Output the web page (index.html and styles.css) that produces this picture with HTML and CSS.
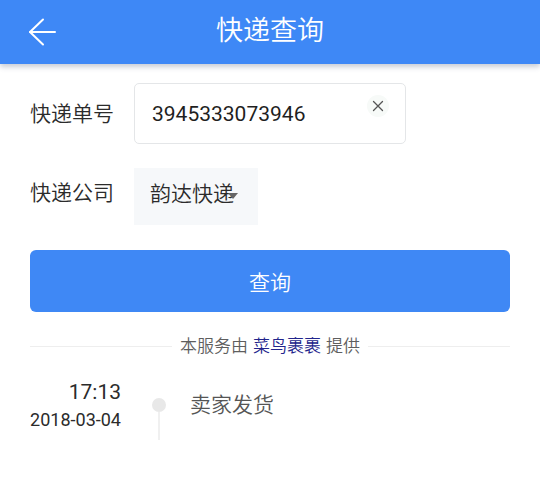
FILE: index.html
```html
<!DOCTYPE html>
<html lang="zh-CN">
<head>
<meta charset="utf-8">
<title>快递查询</title>
<link rel="stylesheet" href="styles.css">
</head>
<body>
<header class="topbar">
  <div class="topbar-left">
    <span class="back" aria-label="返回">
      <svg width="28" height="28" viewBox="0 0 28 28" fill="none" stroke="#fff" stroke-width="2" stroke-linecap="round" stroke-linejoin="round">
        <path d="M2 14 H27"/>
        <path d="M15 1.5 L2 14 L15 26.5"/>
      </svg>
    </span>
  </div>
  <h1 class="title">快递查询</h1>
  <div></div>
</header>

<main class="page">
  <div class="row">
    <div class="label">快递单号</div>
    <div class="input">
      <span class="input-value">3945333073946</span>
      <span class="clear" aria-label="清除">
        <svg width="12" height="12" viewBox="0 0 12 12" fill="none" stroke="#555" stroke-width="1.3" stroke-linecap="round">
          <path d="M1.5 1.5 L10.5 10.5 M10.5 1.5 L1.5 10.5"/>
        </svg>
      </span>
    </div>
  </div>

  <div class="row row-company">
    <div class="label label-company">快递公司</div>
    <div class="select">
      <span>韵达快递</span>
      <span class="caret"></span>
    </div>
  </div>

  <button class="query">查询</button>

  <div class="provider">
    <span class="provider-text">本服务由<b class="brand">菜鸟裹裹</b>提供</span>
  </div>

  <ul class="timeline">
    <li class="event">
      <div class="when">
        <div class="time">17:13</div>
        <div class="date">2018-03-04</div>
      </div>
      <div class="axis">
        <span class="dot"></span>
        <span class="stem"></span>
      </div>
      <div class="what">卖家发货</div>
    </li>
  </ul>
</main>
</body>
</html>
```

FILE: styles.css
```css
* { box-sizing: border-box; }

body {
  margin: 0;
  background: #fff;
  font-family: "Roboto", "Noto Sans CJK SC", "Noto Sans", sans-serif;
  font-weight: 400;
  color: #333;
}

.topbar {
  height: 64px;
  background: #3e88f6;
  display: grid;
  grid-template-columns: 1fr auto 1fr;
  align-items: center;
  box-shadow: 0 3px 5px rgba(60, 80, 110, 0.28);
  position: relative;
  z-index: 1;
}

.topbar-left {
  padding-left: 28px;
  display: flex;
  align-items: center;
}

.back {
  display: flex;
  width: 28px;
  height: 28px;
}

.title {
  margin: 0;
  font-size: 27px;
  font-weight: 350;
  color: #fff;
  line-height: 32px;
  margin-top: -2px;
}

.page {
  padding: 19px 30px 0 30px;
}

.row {
  display: flex;
  align-items: center;
}

.label {
  width: 104px;
  font-size: 21px;
  font-weight: 350;
  color: #2b2b2b;
  line-height: 28px;
}

.input {
  position: relative;
  width: 272px;
  height: 61px;
  border: 1px solid #e4e6e8;
  border-radius: 5px;
  padding-left: 17px;
  display: flex;
  align-items: center;
  font-size: 21px;
  color: #1f1f1f;
}

.input-value {
  line-height: 28px;
}

.clear {
  position: absolute;
  right: 16px;
  top: 11px;
  width: 22px;
  height: 22px;
  border-radius: 50%;
  background: #f7faf8;
  display: flex;
  align-items: center;
  justify-content: center;
}

.row-company {
  margin-top: 24px;
}

.label-company {
  padding-bottom: 7px;
}

.select {
  position: relative;
  width: 124px;
  height: 57px;
  background: #f6f8fa;
  padding: 0 0 6px 16px;
  display: flex;
  align-items: center;
  font-size: 21px;
  font-weight: 350;
  color: #2b2b2b;
  line-height: 28px;
}

.caret {
  position: absolute;
  left: 94px;
  top: 25px;
  width: 0;
  height: 0;
  border-top: 6px solid #666;
  border-left: 5px solid transparent;
  border-right: 5px solid transparent;
}

.query {
  display: block;
  width: 480px;
  height: 62px;
  margin-top: 25px;
  border: 0;
  border-radius: 6px;
  background: #3f88f5;
  color: #fff;
  font-family: inherit;
  font-weight: 350;
  font-size: 21px;
  padding: 0;
}

.provider {
  margin-top: 22px;
  height: 24px;
  display: flex;
  align-items: center;
  gap: 8px;
}

.provider::before,
.provider::after {
  content: "";
  flex: 1;
  height: 1px;
  background: #eeeeee;
}

.provider-text {
  font-size: 17px;
  font-weight: 350;
  color: #5e5e5e;
  line-height: 24px;
  white-space: nowrap;
}

.brand {
  font-weight: 350;
  color: #22248c;
  margin: 0 5px;
}

.timeline {
  list-style: none;
  margin: 22px 0 0 0;
  padding: 0;
}

.event {
  display: flex;
  align-items: flex-start;
}

.when {
  width: 91px;
  text-align: right;
  color: #2b2b2b;
}

.time {
  font-size: 21px;
  line-height: 24px;
}

.date {
  font-size: 18px;
  line-height: 24px;
  margin-top: 4px;
}

.axis {
  width: 14px;
  margin-left: 31px;
  padding-top: 18px;
  display: flex;
  flex-direction: column;
  align-items: center;
}

.dot {
  width: 14px;
  height: 14px;
  border-radius: 50%;
  background: #e8e8e8;
}

.stem {
  width: 2px;
  height: 28px;
  background: #f0f0f0;
}

.what {
  margin-left: 24px;
  margin-top: 12px;
  font-size: 21px;
  font-weight: 350;
  line-height: 26px;
  color: #555;
}
```
